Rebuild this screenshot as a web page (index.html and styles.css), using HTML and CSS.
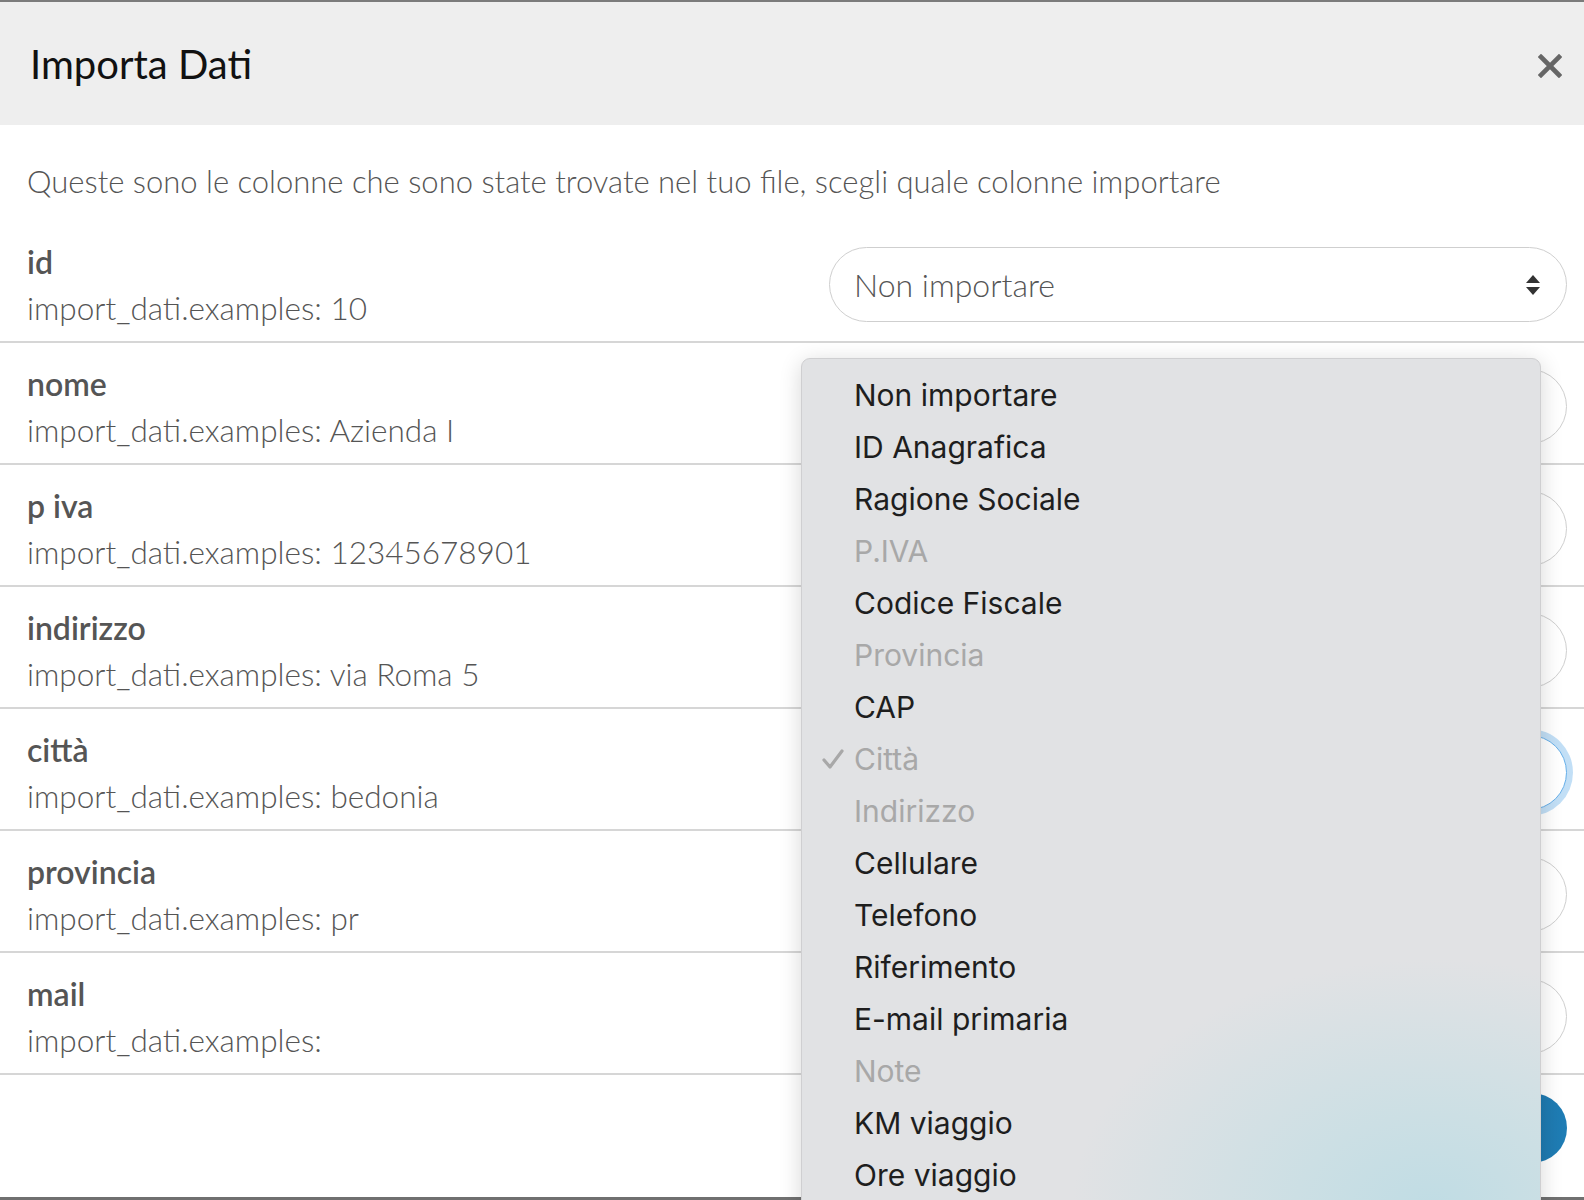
FILE: index.html
```html
<!DOCTYPE html>
<html lang="it">
<head>
<meta charset="utf-8">
<title>Importa Dati</title>
<link rel="stylesheet" href="styles.css">
</head>
<body>
<div class="modal">
  <div class="modal-header">
    <h1 class="modal-title">Importa Dati</h1>
    <button class="close" aria-label="Chiudi">
      <svg width="24" height="24" viewBox="0 0 24 24"><path d="M3 3 L21 21 M21 3 L3 21" stroke="#666" stroke-width="4.6" stroke-linecap="square" fill="none"/></svg>
    </button>
  </div>
  <div class="modal-body">
    <p class="intro">Queste sono le colonne che sono state trovate nel tuo file, scegli quale colonne importare</p>
    <div class="row">
      <div class="col-info"><div class="label">id</div><div class="example">import_dati.examples: 10</div></div>
      <div class="select"><span>Non importare</span><span class="arrows"></span></div>
    </div>
    <div class="row">
      <div class="col-info"><div class="label">nome</div><div class="example">import_dati.examples: Azienda I</div></div>
      <div class="select"><span>Ragione Sociale</span><span class="arrows"></span></div>
    </div>
    <div class="row">
      <div class="col-info"><div class="label">p iva</div><div class="example">import_dati.examples: 12345678901</div></div>
      <div class="select"><span>P.IVA</span><span class="arrows"></span></div>
    </div>
    <div class="row">
      <div class="col-info"><div class="label">indirizzo</div><div class="example">import_dati.examples: via Roma 5</div></div>
      <div class="select"><span>Indirizzo</span><span class="arrows"></span></div>
    </div>
    <div class="row">
      <div class="col-info"><div class="label">città</div><div class="example">import_dati.examples: bedonia</div></div>
      <div class="select focused"><span>Città</span><span class="arrows"></span></div>
    </div>
    <div class="row">
      <div class="col-info"><div class="label">provincia</div><div class="example">import_dati.examples: pr</div></div>
      <div class="select"><span>Provincia</span><span class="arrows"></span></div>
    </div>
    <div class="row">
      <div class="col-info"><div class="label">mail</div><div class="example">import_dati.examples:</div></div>
      <div class="select"><span>Note</span><span class="arrows"></span></div>
    </div>
    <div class="footer">
      <button class="btn-primary">Importa</button>
    </div>
  </div>
  <div class="bottom-bar"></div>

  <ul class="dropdown">
    <li>Non importare</li>
    <li>ID Anagrafica</li>
    <li>Ragione Sociale</li>
    <li class="disabled">P.IVA</li>
    <li>Codice Fiscale</li>
    <li class="disabled">Provincia</li>
    <li>CAP</li>
    <li class="disabled checked"><svg class="check" width="22" height="22" viewBox="0 0 22 22"><path d="M2 12 L8 19 L20 3" stroke="#a8a8a8" stroke-width="3.2" fill="none" stroke-linecap="round" stroke-linejoin="round"/></svg>Città</li>
    <li class="disabled">Indirizzo</li>
    <li>Cellulare</li>
    <li>Telefono</li>
    <li>Riferimento</li>
    <li>E-mail primaria</li>
    <li class="disabled">Note</li>
    <li>KM viaggio</li>
    <li>Ore viaggio</li>
  </ul>
</div>
</body>
</html>
```

FILE: styles.css
```css
html, body {
  margin: 0;
  padding: 0;
  background: #ffffff;
  height: 1200px;
  overflow: hidden;
}

.modal {
  position: relative;
  border-top: 2px solid #7b7b7b;
  font-family: Lato, "Open Sans", sans-serif;
  color: #555;
  height: 1198px;
  overflow: hidden;
  display: flex;
  flex-direction: column;
}

.modal-header {
  background: #eeeeee;
  height: 123px;
  display: flex;
  align-items: center;
  justify-content: space-between;
  padding: 0 22px 0 30px;
  box-sizing: border-box;
  flex-shrink: 0;
}

.modal-title {
  margin: 0;
  font-size: 40px;
  font-weight: 400;
  color: #111;
  line-height: 1;
}

.close {
  border: 0;
  background: none;
  padding: 0;
  width: 24px;
  height: 24px;
  margin-top: 4px;
  display: flex;
}

.modal-body {
  padding-top: 34px;
  flex: 1;
}

.intro {
  margin: 0 0 17px;
  padding: 0 27px;
  font-size: 31px;
  font-weight: 300;
  line-height: 45px;
  color: #555;
}

.row {
  display: flex;
  justify-content: space-between;
  align-items: flex-start;
  height: 120px;
  border-bottom: 2px solid #d6d6d6;
  padding: 0 17px 0 27px;
}

.col-info {
  padding-top: 17px;
  line-height: 47px;
}

.label {
  font-size: 32px;
  font-weight: 600;
  color: #555;
}

.example {
  font-size: 31.5px;
  font-weight: 300;
  color: #555;
}

.select {
  margin-top: 26px;
  width: 738px;
  height: 75px;
  box-sizing: border-box;
  border: 1.5px solid #cfcfcf;
  border-radius: 38px;
  display: flex;
  align-items: center;
  justify-content: space-between;
  padding: 0 25px 0 24px;
  font-size: 32px;
  font-weight: 300;
  color: #555;
  background: #fff;
}

.select.focused {
  border-color: #66afe9;
  box-shadow: 0 0 0 6px rgba(102, 175, 233, 0.4);
}

.arrows {
  position: relative;
  width: 15px;
  height: 20px;
}

.arrows::before,
.arrows::after {
  content: "";
  position: absolute;
  left: 0;
  border-left: 7.5px solid transparent;
  border-right: 7.5px solid transparent;
}

.arrows::before {
  top: 0;
  border-bottom: 8px solid #333;
}

.arrows::after {
  bottom: 0;
  border-top: 8px solid #333;
}

.footer {
  height: 121px;
  display: flex;
  justify-content: flex-end;
  align-items: flex-start;
  padding-right: 17px;
}

.btn-primary {
  margin-top: 18px;
  height: 70px;
  padding: 0 40px;
  border: 0;
  border-radius: 35px;
  background: linear-gradient(90deg, #1d6a9c, #1f7db5);
  color: #fff;
  font-family: Lato, sans-serif;
  font-size: 28px;
}

.bottom-bar {
  height: 3px;
  background: #707070;
  flex-shrink: 0;
}

.dropdown {
  position: absolute;
  left: 801px;
  top: 356px;
  width: 740px;
  height: 900px;
  margin: 0;
  padding: 10px 0 0;
  list-style: none;
  box-sizing: border-box;
  border-radius: 9px;
  border: 1px solid #cfcfd1;
  background:
    radial-gradient(ellipse 360px 250px at 630px 850px, rgba(190, 220, 228, 0.95) 0%, rgba(196, 222, 228, 0.7) 40%, rgba(225, 226, 228, 0) 100%),
    #e1e2e4;
  box-shadow: 0 4px 22px rgba(0, 0, 0, 0.16);
  font-family: Inter, "Noto Sans", sans-serif;
  font-size: 30px;
  color: #1e1e1e;
}

.dropdown li {
  position: relative;
  height: 52px;
  line-height: 52px;
  padding-left: 52px;
}

.dropdown li.disabled {
  color: #a8a8a8;
}

.check {
  position: absolute;
  left: 20px;
  top: 15px;
}
```
